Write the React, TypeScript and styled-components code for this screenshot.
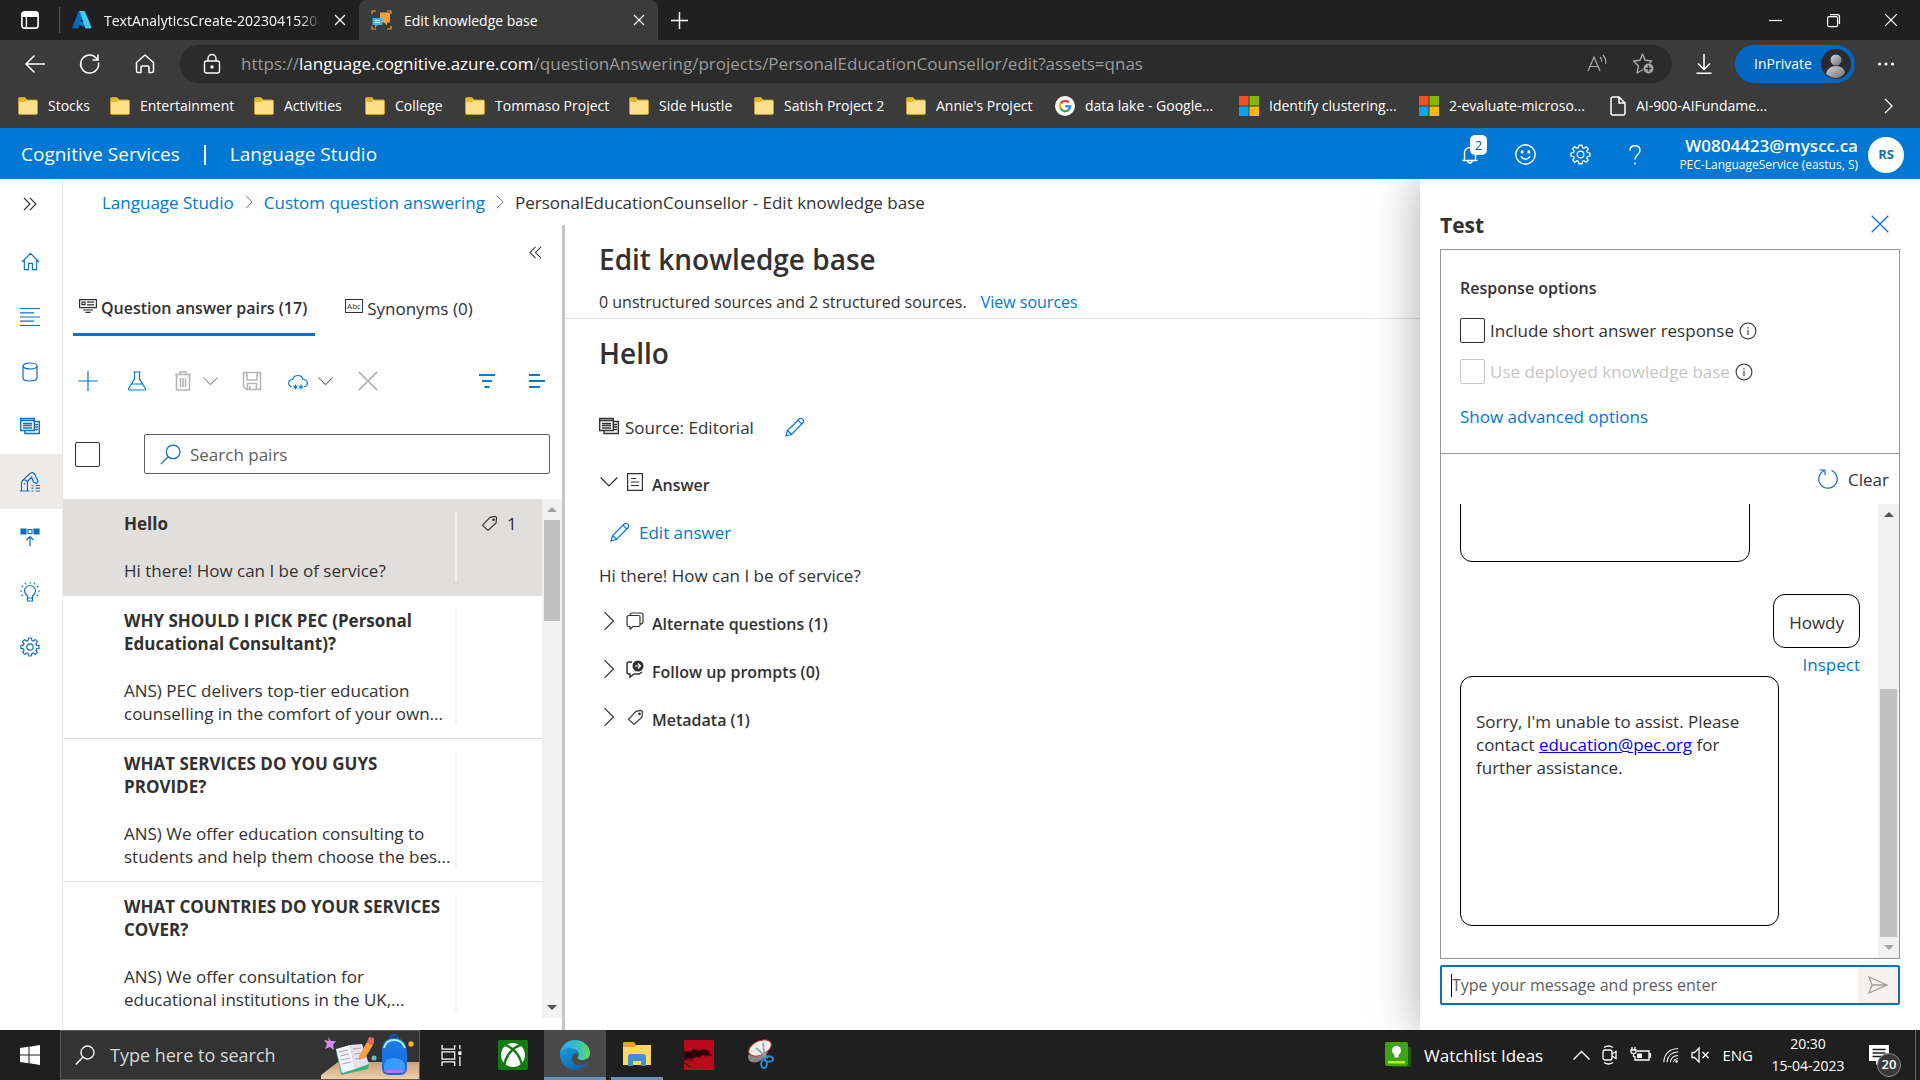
import React from "react";
import styled, { createGlobalStyle } from "styled-components";

const FONT = '"Open Sans", "Noto Sans", sans-serif';
const BLUE = "#0078d4";
const INK = "#323130";

const Global = createGlobalStyle`
  *, *::before, *::after { box-sizing: border-box; }
  html, body { margin: 0; padding: 0; }
  body { font-family: ${FONT}; font-size: 17px; line-height: 23px; color: ${INK}; background: #fff; overflow: hidden; }
  button, input { font: inherit; color: inherit; margin: 0; }
  h1, h2, h3, p, ul, ol { margin: 0; padding: 0; font-weight: inherit; font-size: inherit; }
  li { list-style: none; }
`;

const Screen = styled.div`
  height: 100vh;
  display: flex;
  flex-direction: column;
`;

/* ---------- icons ---------- */

const Svg = styled.svg`
  display: block;
  flex: none;
  overflow: visible;
`;

type IconProps = { w?: number; h?: number; box?: string; c?: string; s?: number; children: React.ReactNode };
const Icon = ({ w = 20, h = w, box = "0 0 20 20", c = "currentColor", s = 1.2, children }: IconProps) => (
  <Svg width={w} height={h} viewBox={box} fill="none" stroke={c} strokeWidth={s} aria-hidden="true">
    {children}
  </Svg>
);

const CloseIcon = ({ w = 12, s = 1.2, c }: { w?: number; s?: number; c?: string }) => (
  <Icon w={w} box="0 0 12 12" s={s} c={c}><path d="M1 1l10 10M11 1L1 11" /></Icon>
);
const ChevronRight = ({ w = 9, h = 18, s = 1.1, c }: { w?: number; h?: number; s?: number; c?: string }) => (
  <Icon w={w} h={h} box="0 0 9 18" s={s} c={c}><path d="M0.5 1l8 8-8 8" /></Icon>
);
const ChevronDown = ({ w = 16, s = 1.1, c }: { w?: number; s?: number; c?: string }) => (
  <Icon w={w} h={w / 2 + 1} box="0 0 16 9" s={s} c={c}><path d="M0.5 0.5l7.500 7.500 7.500-7.500" /></Icon>
);
const Gear = ({ w = 20, c }: { w?: number; c?: string }) => (
  <Icon w={w} c={c}>
    <circle cx="10" cy="10" r="3.200" />
    <path strokeLinejoin="round" d="M8.600 1h2.800l.5 2.500 1.400.6 2.100-1.500 2 2-1.500 2.100.6 1.400 2.500.5v2.800l-2.500.5-.6 1.400 1.500 2.100-2 2-2.100-1.500-1.400.6-.5 2.500H8.600l-.5-2.500-1.400-.6-2.100 1.500-2-2 1.500-2.100-.6-1.400L.9 11.400V8.600l2.500-.5.6-1.400-1.500-2.100 2-2 2.100 1.500 1.400-.6z" />
  </Icon>
);
const HomeIcon = ({ w = 20, c }: { w?: number; c?: string }) => (
  <Icon w={w} c={c}><path d="M1 10.500L10 1.500l9 9M3.500 8.500V18.500h4.500v-6.500h4v6.500h4.500V8.500" /></Icon>
);
const SourcesIcon = ({ w = 20, c }: { w?: number; c?: string }) => (
  <Icon w={w} c={c}>
    <path d="M.7 1.500h13.600v12H.7zM14.500 4.500h4.800v12H5V14M.7 3.500h13.600M3 6.500h9M3 8.500h9M3 11h9M15 7.500h3M15 10h3M15 12.500h3" strokeWidth="1.400" />
  </Icon>
);
const Pencil = ({ c = BLUE }: { c?: string }) => (
  <Icon w={20} h={20} c={c}><path d="M1 19l1.500-5.500L14.500 1.800a1.800 1.800 0 0 1 2.600 0l1.100 1.100a1.800 1.800 0 0 1 0 2.600L6.500 17.500zM2.500 13.500l4 4M13 3.200l3.900 3.900" /></Icon>
);
const TagIcon = ({ w = 18 }: { w?: number }) => (
  <Icon w={w} box="0 0 18 18">
    <path d="M9.500 2.500L15 1.500l1.500 1-.6 6L7.500 16.300 1.500 11z" strokeLinejoin="round" />
    <circle cx="13.300" cy="5" r=".8" fill="currentColor" />
  </Icon>
);
const InfoIcon = () => (
  <Icon w={18}><circle cx="10" cy="10" r="8.800" /><path d="M10 8.500v6M10 5.500v1.600" /></Icon>
);
const FolderIcon = () => (
  <Svg width="20" height="18" viewBox="0 0 20 18" aria-hidden="true">
    <path d="M.5 2Q.5.500 2 .5h5l2 2.500h9.500Q19.500 3 19.500 4.500V16Q19.500 17.500 18 17.500H2Q.5 17.500.5 16z" fill="#ffe08a" stroke="#c19c2a" />
    <path d="M1 5h6l2-2L7 1H2Q1 1 1 2z" fill="#e8b730" />
  </Svg>
);
const MsIcon = () => (
  <Svg width="20" height="20" viewBox="0 0 20 20" aria-hidden="true">
    <path fill="#f25022" d="M0 0h9.500v9.500H0z" /><path fill="#7fba00" d="M10.500 0H20v9.500h-9.500z" />
    <path fill="#00a4ef" d="M0 10.500h9.500V20H0z" /><path fill="#ffb900" d="M10.500 10.500H20V20h-9.500z" />
  </Svg>
);
const GoogleIcon = () => (
  <Svg width="20" height="20" viewBox="0 0 20 20" fill="none" strokeWidth="2.400" aria-hidden="true">
    <circle cx="10" cy="10" r="10" fill="#fff" />
    <path stroke="#ea4335" d="M5.600 7.500A5.200 5.200 0 0 1 13.800 6.400" /><path stroke="#fbbc05" d="M5.600 7.300a5.400 5.400 0 0 0 0 5.400" />
    <path stroke="#34a853" d="M5.600 12.500a5.200 5.200 0 0 0 8 1.300" /><path stroke="#4285f4" d="M10.200 10.200h5a5.200 5.200 0 0 1-1.700 3.700" />
  </Svg>
);
const DocIcon = () => (
  <Icon w={16} h={20} box="0 0 16 20" s={1.5}><path strokeLinejoin="round" d="M1 3q0-2 2-2h6l6 6v10q0 2-2 2H3q-2 0-2-2zM9 1v6h6" /></Icon>
);

/* ---------- browser chrome ---------- */

const IconButton = styled.button<{ $w?: number; $c?: string }>`
  flex: none;
  width: ${(p) => p.$w ?? 40}px;
  height: 32px;
  padding: 0;
  border: 0;
  background: none;
  color: ${(p) => p.$c ?? "inherit"};
  display: flex;
  align-items: center;
  justify-content: center;
`;

const TabStrip = styled.div`
  flex: none;
  height: 40px;
  background: #202020;
  color: #fff;
  display: flex;
  align-items: center;
  font-size: 14px;
`;
const TabMenu = styled.div`
  width: 59px;
  display: flex;
  align-items: center;
  justify-content: center;
`;
const BrowserTab = styled.div<{ $active?: boolean }>`
  width: 299px;
  height: 100%;
  display: flex;
  align-items: center;
  padding: 0 0 0 12px;
  border-radius: 8px 8px 0 0;
  background: ${(p) => (p.$active ? "#3b3b3b" : "transparent")};
`;
const TabSeparator = styled.div`
  width: 1px;
  height: 26px;
  background: #5a5a5a;
`;
const TabText = styled.span<{ $fade?: boolean }>`
  flex: 1;
  min-width: 0;
  margin-left: 12px;
  overflow: hidden;
  white-space: nowrap;
  ${(p) => p.$fade && "mask-image: linear-gradient(to right, #000 90%, transparent);"}
`;
const WindowButtons = styled.div`
  margin-left: auto;
  display: flex;
  align-items: center;
`;

const Toolbar = styled.div`
  flex: none;
  height: 48px;
  background: #3b3b3b;
  color: #fff;
  display: flex;
  align-items: center;
  padding: 0 8px 1px 7px;
`;
const NavButtons = styled.div`
  display: flex;
  width: 173px;
`;
const AddressBar = styled.div`
  flex: 1;
  min-width: 0;
  height: 38px;
  border-radius: 19px;
  background: #2b2b2b;
  display: flex;
  align-items: center;
  padding: 0 6px 0 23px;
  gap: 20px;
  color: #9a9a9a;
  b { color: #fff; font-weight: 400; }
`;
const Url = styled.span`
  flex: 1;
  white-space: nowrap;
  overflow: hidden;
`;
const AddressTools = styled.div`
  display: flex;
  color: #a8a8a8;
`;
const PrivateButton = styled.button`
  flex: none;
  width: 120px;
  height: 38px;
  margin: 0 4px 0 0;
  border: 0;
  border-radius: 19px;
  background: #0067c0;
  color: #fff;
  font-size: 14px;
  padding: 0 4px 0 19px;
  display: flex;
  align-items: center;
  justify-content: space-between;
`;

const Bookmarks = styled.nav`
  flex: none;
  height: 40px;
  background: #3b3b3b;
  color: #fff;
  font-size: 14px;
  display: flex;
  align-items: center;
  padding: 0 7px 5px 18px;
  gap: 20px;
`;
const Bookmark = styled.a<{ $w: number }>`
  flex: none;
  width: ${(p) => p.$w}px;
  display: flex;
  align-items: center;
  gap: 10px;
  white-space: nowrap;
  color: inherit;
  text-decoration: none;
`;

const bookmarks = [
  { t: "Stocks", w: 72, i: <FolderIcon /> },
  { t: "Entertainment", w: 124, i: <FolderIcon /> },
  { t: "Activities", w: 91, i: <FolderIcon /> },
  { t: "College", w: 80, i: <FolderIcon /> },
  { t: "Tommaso Project", w: 144, i: <FolderIcon /> },
  { t: "Side Hustle", w: 105, i: <FolderIcon /> },
  { t: "Satish Project 2", w: 132, i: <FolderIcon /> },
  { t: "Annie's Project", w: 129, i: <FolderIcon /> },
  { t: "data lake - Google...", w: 164, i: <GoogleIcon /> },
  { t: "Identify clustering...", w: 160, i: <MsIcon /> },
  { t: "2-evaluate-microso...", w: 171, i: <MsIcon /> },
  { t: "AI-900-AIFundame...", w: 170, i: <DocIcon /> },
];

/* ---------- portal header ---------- */

const PortalHeader = styled.header`
  flex: none;
  height: 51px;
  background: ${BLUE};
  color: #fff;
  display: flex;
  align-items: center;
  padding: 2px 16px 0 21px;
  font-size: 19px;
`;
const Divider = styled.span`
  width: 2px;
  height: 20px;
  margin: 0 24px;
  background: #fff;
`;
const HeaderTools = styled.div`
  margin-left: auto;
  display: flex;
  gap: 15px;
`;
const Bell = styled.span`
  position: relative;
`;
const Badge = styled.span`
  position: absolute;
  left: 10px;
  top: -10px;
  width: 17px;
  height: 20px;
  border-radius: 5px;
  background: #fff;
  color: #005a9e;
  font-size: 13px;
  line-height: 20px;
`;
const Account = styled.div`
  width: 203px;
  margin-right: 10px;
  text-align: right;
  white-space: nowrap;
  font-size: 12px;
  line-height: 18px;
  strong { display: block; font-size: 17px; line-height: 20px; font-weight: 600; }
`;
const Avatar = styled.button`
  width: 36px;
  height: 36px;
  border: 0;
  border-radius: 50%;
  padding: 0;
  background: #fff;
  color: #106ebe;
  font-size: 13px;
  font-weight: 700;
`;

/* ---------- page ---------- */

const Page = styled.div`
  flex: 1;
  min-height: 0;
  display: flex;
  background: #fff;
`;
const Rail = styled.nav`
  flex: none;
  width: 63px;
  border-right: 1px solid #edebe9;
  color: #106ebe;
`;
const RailItem = styled.button<{ $active?: boolean; $first?: boolean }>`
  width: 100%;
  height: ${(p) => (p.$first ? 50 : 55)}px;
  margin-bottom: ${(p) => (p.$first ? 5 : 0)}px;
  padding: 0 2px 0 0;
  border: 0;
  display: flex;
  align-items: center;
  justify-content: center;
  background: ${(p) => (p.$active ? "#edebe9" : "transparent")};
  color: ${(p) => (p.$first ? INK : "inherit")};
`;
const Center = styled.div`
  flex: 1;
  min-width: 0;
  display: flex;
  flex-direction: column;
`;
const Crumbs = styled.ol`
  flex: none;
  height: 46px;
  padding: 0 0 0 39px;
  display: flex;
  align-items: center;
  gap: 11px;
  white-space: nowrap;
  li { display: flex; align-items: center; gap: 11px; }
`;
const Link = styled.a`
  color: ${BLUE};
  text-decoration: none;
`;
const Columns = styled.div`
  flex: 1;
  min-height: 0;
  display: flex;
`;
const PairsPanel = styled.section`
  flex: none;
  width: 502px;
  border-right: 3px solid #c8c6c4;
  display: flex;
  flex-direction: column;
`;
const Collapse = styled.div`
  display: flex;
  justify-content: flex-end;
  padding: 11px 7px 0 0;
`;
const Tabs = styled.div`
  display: flex;
  margin: 13px 0 0 10px;
  gap: 14px;
`;
const Tab = styled.button<{ $active?: boolean }>`
  height: 55px;
  padding: 3px ${(p) => (p.$active ? 8 : 16)}px 0 ${(p) => (p.$active ? 6 : 16)}px;
  border: 0;
  border-bottom: 3px solid ${(p) => (p.$active ? "#106ebe" : "transparent")};
  background: none;
  display: flex;
  align-items: center;
  gap: 4px;
  font-size: ${(p) => (p.$active ? 16 : 17)}px;
  font-weight: ${(p) => (p.$active ? 600 : 400)};
  white-space: nowrap;
  svg { margin-bottom: 5px; }
`;
const Commands = styled.div`
  height: 90px;
  display: flex;
  align-items: center;
  padding: 0 0 0 9px;
`;
const Spacer = styled.span`
  flex: 1;
`;
const SearchRow = styled.div`
  display: flex;
  align-items: center;
  gap: 44px;
  padding: 0 12px 25px 12px;
  margin-top: 8px;
`;
const Check = styled.input`
  appearance: none;
  flex: none;
  width: 25px;
  height: 25px;
  border: 1px solid ${INK};
  border-radius: 2px;
  background: #fff;
  &:disabled { border-color: #c8c6c4; }
`;
const SearchBox = styled.label`
  flex: 1;
  height: 40px;
  border: 1px solid #605e5c;
  border-radius: 2px;
  display: flex;
  align-items: center;
  gap: 9px;
  padding: 0 15px;
  color: #106ebe;
`;
const PlainInput = styled.input`
  flex: 1;
  min-width: 0;
  padding: 0;
  border: 0;
  outline: 0;
  background: none;
  color: ${INK};
  &::placeholder { color: #605e5c; opacity: 1; }
`;
const ListArea = styled.div`
  flex: 1;
  min-height: 0;
  margin-bottom: 12px;
  display: flex;
`;
const PairList = styled.ul`
  flex: 1;
  min-width: 0;
  overflow: hidden;
`;
const Pair = styled.li<{ $active?: boolean }>`
  display: flex;
  padding: 13px 0 13px 61px;
  border-bottom: 1px solid #e1dfdd;
  background: ${(p) => (p.$active ? "#e1dfdd" : "#fff")};
`;
const PairText = styled.div`
  width: 333px;
  border-right: 2px solid #f3f2f1;
  white-space: pre-line;
  h3 { font-weight: 700; margin-bottom: 24px; white-space: pre; }
`;
const PairMeta = styled.div`
  display: flex;
  gap: 9px;
  align-self: flex-start;
  align-items: center;
  padding-left: 24px;
`;
const ScrollTrack = styled.div<{ $w: number }>`
  flex: none;
  width: ${(p) => p.$w}px;
  background: #f1f1f1;
  display: flex;
  flex-direction: column;
  align-items: center;
  padding: 0 2px;
`;
const ScrollArrow = styled.span<{ $up?: boolean; $dim?: boolean }>`
  flex: none;
  height: 21px;
  display: flex;
  align-items: center;
  &::before {
    content: "";
    border: 5px solid transparent;
    ${(p) => (p.$up ? "border-top: 0; border-bottom" : "border-bottom: 0; border-top")}: 5px solid ${(p) => (p.$dim ? "#a3a3a3" : "#505050")};
  }
`;
const ScrollThumb = styled.span<{ $before: number; $size: number; $after: number }>`
  flex: 1;
  width: 100%;
  display: grid;
  grid-template-rows: ${(p) => `${p.$before}fr ${p.$size}fr ${p.$after}fr`};
  &::before { content: ""; grid-row: 2; background: #c1c1c1; }
`;

const pairs = [
  { q: "Hello", a: "Hi there! How can I be of service?", tags: 1, active: true },
  { q: "WHY SHOULD I PICK PEC (Personal\nEducational Consultant)?", a: "ANS) PEC delivers top-tier education\ncounselling in the comfort of your own..." },
  { q: "WHAT SERVICES DO YOU GUYS\nPROVIDE?", a: "ANS) We offer education consulting to\nstudents and help them choose the bes..." },
  { q: "WHAT COUNTRIES DO YOUR SERVICES\nCOVER?", a: "ANS) We offer consultation for\neducational institutions in the UK,..." },
];

const Editor = styled.main`
  flex: 1;
  min-width: 0;
`;
const EditorHead = styled.div`
  height: 94px;
  padding: 15px 34px 0;
  border-bottom: 1px solid #e1dfdd;
`;
const Title = styled.h1`
  font-size: 28px;
  line-height: 38px;
  font-weight: 600;
`;
const SubLine = styled.p`
  display: flex;
  gap: 14px;
  margin-top: 13px;
  font-size: 16px;
`;
const EditorBody = styled.div`
  padding: 15px 34px;
`;
const SourceLine = styled.div`
  display: flex;
  align-items: center;
  gap: 6px;
  margin-top: 39px;
  height: 32px;
  button { margin-left: 14px; }
`;
const Section = styled.button`
  width: 100%;
  height: 48px;
  padding: 2px 0 0;
  border: 0;
  background: none;
  display: grid;
  grid-template-columns: 19px 18px 1fr;
  column-gap: 8px;
  align-items: center;
  justify-items: center;
  font-size: 16px;
  font-weight: 600;
  svg { margin-bottom: 6px; }
  span { justify-self: start; }
`;
const AnswerBlock = styled.div`
  margin-top: 17px;
`;
const EditAnswer = styled.button`
  height: 48px;
  padding: 0 11px;
  border: 0;
  background: none;
  color: ${BLUE};
  display: flex;
  align-items: center;
  gap: 9px;
`;
const AnswerText = styled.p`
  margin: 8px 0 12px;
`;

/* ---------- test panel ---------- */

const TestPanel = styled.aside`
  flex: none;
  width: 500px;
  padding: 0 20px 25px;
  background: #fff;
  box-shadow: 0 0 45px rgba(0, 0, 0, 0.35);
  clip-path: inset(0 0 0 -60px);
  display: flex;
  flex-direction: column;
`;
const TestHead = styled.div`
  height: 70px;
  padding-top: 20px;
  display: flex;
  align-items: center;
  justify-content: space-between;
  h2 { font-size: 21px; font-weight: 700; line-height: 30px; padding-top: 2px; }
`;
const TestBox = styled.div`
  flex: 1;
  min-height: 0;
  border: 1px solid #979593;
  display: flex;
  flex-direction: column;
`;
const Options = styled.div`
  height: 204px;
  padding: 27px 19px 0;
  border-bottom: 1px solid #979593;
  h3 { font-size: 16px; font-weight: 600; margin-bottom: 10px; }
`;
const OptionRow = styled.div`
  height: 41px;
  display: flex;
  align-items: center;
  gap: 5px;
`;
const OptionLabel = styled.label<{ $off?: boolean }>`
  color: ${(p) => (p.$off ? "#c8c6c4" : "inherit")};
`;
const Advanced = styled(Link)`
  display: block;
  margin-top: 13px;
`;
const ClearRow = styled.div`
  height: 50px;
  padding: 0 10px 0 0;
  display: flex;
  justify-content: flex-end;
`;
const ClearButton = styled.button`
  border: 0;
  padding: 0;
  background: none;
  display: flex;
  align-items: center;
  gap: 10px;
`;
const ChatArea = styled.div`
  flex: 1;
  min-height: 0;
  display: flex;
`;
const Chat = styled.div`
  flex: 1;
  min-height: 0;
  overflow: hidden;
  padding: 0 18px 32px 19px;
  display: flex;
  flex-direction: column;
  justify-content: flex-end;
`;
const BotBubble = styled.div<{ $w: number }>`
  flex: none;
  width: ${(p) => p.$w}px;
  height: 250px;
  padding: 33px 15px;
  border: 1px solid #000;
  border-radius: 12px;
  a { color: #0000ee; }
`;
const UserBubble = styled.div`
  flex: none;
  align-self: flex-end;
  height: 54px;
  margin-top: 32px;
  padding: 2px 15px 0;
  border: 1px solid #000;
  border-radius: 12px;
  display: flex;
  align-items: center;
`;
const Inspect = styled(Link)`
  align-self: flex-end;
  margin-top: 5px;
`;
const MessageBox = styled.form`
  flex: none;
  height: 40px;
  margin-top: 6px;
  border: 2px solid #106ebe;
  border-radius: 2px;
  display: flex;
  align-items: center;
  padding-left: 9px;
  font-size: 16px;
`;
const Caret = styled.span`
  width: 1px;
  height: 23px;
  background: #000;
`;
const Send = styled.button`
  align-self: stretch;
  width: 40px;
  border: 0;
  padding: 0;
  background: #f3f2f1;
  color: #a19f9d;
  display: flex;
  align-items: center;
  justify-content: center;
`;

/* ---------- taskbar ---------- */

const Taskbar = styled.footer`
  flex: none;
  height: 50px;
  background: #1f1f1f;
  color: #fff;
  display: flex;
  align-items: stretch;
`;
const Start = styled.button`
  width: 60px;
  border: 0;
  padding: 0;
  background: none;
  display: flex;
  align-items: center;
  justify-content: center;
`;
const TaskSearch = styled.label`
  width: 360px;
  background: #333;
  border: 1px solid #5a5a5a;
  display: flex;
  align-items: center;
  gap: 15px;
  padding-left: 14px;
  font-size: 18px;
  color: #fff;
  input { color: #fff; }
  input::placeholder { color: #d6d6d6; }
`;
const TaskApp = styled.button<{ $on?: boolean; $open?: boolean }>`
  width: ${(p) => (p.$open ? 52 : 62)}px;
  margin: 0 ${(p) => (p.$open ? 5 : 0)}px;
  border: 0;
  border-bottom: 3px solid transparent;
  padding: 3px 0 0;
  background: ${(p) => (p.$on ? "#4a4a4a" : "none")};
  ${(p) => (p.$on || p.$open) && "border-bottom-color: #6893bb;"}
  display: flex;
  align-items: center;
  justify-content: center;
`;
const TrayText = styled.span`
  font-size: 15px;
`;
const Watchlist = styled.button`
  margin-left: auto;
  width: 188px;
  border: 0;
  padding: 0;
  background: none;
  font-size: 17px;
  white-space: nowrap;
  display: flex;
  align-items: center;
  gap: 13px;
`;
const Tray = styled.div`
  width: 180px;
  display: flex;
  align-items: center;
  justify-content: space-between;
`;
const Clock = styled.time`
  width: 113px;
  font-size: 14px;
  line-height: 22px;
  text-align: center;
  padding: 3px 3px 0 0;
`;
const Notify = styled.button`
  width: 50px;
  margin-right: 4px;
  border: 0;
  border-right: 1px solid #6a6a6a;
  padding: 0 0 0 3px;
  background: none;
  display: flex;
  align-items: center;
`;
const NotifyIcon = styled.span`
  position: relative;
`;
const NotifyCount = styled.span`
  position: absolute;
  left: 8px;
  top: 8px;
  width: 24px;
  height: 24px;
  border: 1px solid #8a8a8a;
  border-radius: 50%;
  background: #3a3a3a;
  font-size: 13px;
  line-height: 21px;
  font-weight: 600;
`;

const SearchArt = () => (
  <Svg width="98" height="48" viewBox="0 0 98 48" aria-hidden="true">
    <defs>
      <linearGradient id="desk" x1="0" y1="0" x2="0" y2="1"><stop offset="0" stopColor="#c8a27c" /><stop offset="1" stopColor="#efd0a8" /></linearGradient>
      <linearGradient id="pack" x1="0" y1="0" x2="0" y2="1"><stop offset="0" stopColor="#1b7fe0" /><stop offset="1" stopColor="#1565e8" /></linearGradient>
    </defs>
    <path d="M0 48V44L17 31H98V48z" fill="url(#desk)" />
    <path d="M7 6l3 4 5 0-3 4 1 5-4-3-5 2 2-5-3-4 5 1z" fill="#d98af0" />
    <path d="M15 19l17-4 16 18-1 5-27 6z" fill="#3fae7c" />
    <path d="M15 18l14-4 5 24-13 4z" fill="#f6f4fa" /><path d="M29 14l12-1 7 20-14 5z" fill="#e6e0ee" />
    <path d="M18 21l9-2M19 25l9-2M20 29l9-2M21 33l9-2M32 18l8-1M33 23l8-1M34 28l8-1" stroke="#a7a3b8" />
    <path d="M38 25l8-14 6 3-8 13-6 2z" fill="#f6a03c" /><path d="M46 11l2-5 5 1 0 5-1 2z" fill="#e8645a" />
    <circle cx="53" cy="27" r="2.500" fill="#5ec6c0" /><circle cx="90" cy="13" r="2.700" fill="#f6b21b" />
    <path d="M69 10q0-6 4-6t4 6" fill="none" stroke="#1556a8" strokeWidth="2.500" />
    <path d="M61 21Q61 7 73 7T86 21V37Q86 44 79 44H68Q61 44 61 37z" fill="url(#pack)" />
    <path d="M63 17Q65 9 73 9T84 17" fill="none" stroke="#a8ecff" strokeWidth="1.800" />
    <path d="M63 35Q63 27 73 27T84 35V41H63z" fill="#3f97ff" /><path d="M65 39h17v3H65z" fill="#a87af0" />
  </Svg>
);

const EdgeLogo = () => (
  <Svg width="30" height="30" viewBox="0 0 30 30" aria-hidden="true">
    <defs>
      <linearGradient id="edgeTop" x1="0" y1="0.500" x2="1" y2="0.500"><stop offset="0" stopColor="#2aa5e8" /><stop offset="0.600" stopColor="#35c1c8" /><stop offset="1" stopColor="#66e05a" /></linearGradient>
      <linearGradient id="edgeLow" x1="0" y1="0" x2="1" y2="1"><stop offset="0" stopColor="#1b9de2" /><stop offset="1" stopColor="#0c59a4" /></linearGradient>
    </defs>
    <path d="M0 15C0 6 7 0 15 0s15 6 15 13c0 5-4 7-8 7-3 0-5-1-4-3 2-4-1-8-6-8-6 0-12 3-12 6z" fill="url(#edgeTop)" />
    <path d="M0 14c1-4 5-6 10-6 4 0 8 3 8 7-1-2-6-2-6 4 0 5 6 9 15 4-3 5-7 7-12 7C6 30 0 23 0 14z" fill="url(#edgeLow)" />
  </Svg>
);

export default function App() {
  return (
    <Screen>
      <Global />
      <TabStrip>
        <TabMenu>
          <Icon w={18}><rect x="1" y="1" width="18" height="18" rx="3" strokeWidth="1.800" /><path d="M1.500 2h17v4h-17z" fill="#fff" /><path d="M6 6v12" strokeWidth="1.500" /></Icon>
        </TabMenu>
        <TabSeparator />
        <BrowserTab>
          <Svg width="20" height="18" viewBox="0 0 20 18" aria-hidden="true">
            <path d="M6.500 0h6L6.200 17.500H1.300Q0 17.500.5 16z" fill="#1066b8" /><path d="M5 11h9l-3 5z" fill="#0078d4" />
            <path d="M7.500 0h5.300l6.500 16q.4 1.500-1 1.500h-5z" fill="#3ccbf4" />
          </Svg>
          <TabText $fade>TextAnalyticsCreate-2023041520</TabText>
          <IconButton $w={38} aria-label="Close tab"><CloseIcon /></IconButton>
        </BrowserTab>
        <BrowserTab $active>
          <Svg width="21" height="20" viewBox="0 0 21 20" aria-hidden="true">
            <path d="M1 4V1h4M16 1h4v3M1 16v3h4M16 19h4v-3" fill="none" stroke="#e8a13a" strokeWidth="1.200" />
            <path d="M9 2.500h10v10h-3v3l-3-3H9z" fill="#f2a33c" /><path d="M1.500 8h10v7H7l-3 3v-3H1.500z" fill="#38b6f0" /><path d="M4 10.500h5M4 12.500h5" stroke="#d4f2ff" />
          </Svg>
          <TabText>Edit knowledge base</TabText>
          <IconButton $w={38} aria-label="Close tab"><CloseIcon /></IconButton>
        </BrowserTab>
        <IconButton aria-label="New tab" $w={43}><Icon w={17} box="0 0 17 17" s={1.5}><path d="M8.500 0v17M0 8.500h17" /></Icon></IconButton>
        <WindowButtons>
          <IconButton $w={58} aria-label="Minimize"><Icon w={13} box="0 0 13 13"><path d="M0 6.500h13" /></Icon></IconButton>
          <IconButton $w={58} aria-label="Restore"><Icon w={13} box="0 0 13 13"><rect x=".6" y="2.600" width="10" height="10" rx="1.500" /><path d="M3 .6h7.500q2 0 2 2V10" /></Icon></IconButton>
          <IconButton $w={58} aria-label="Close"><CloseIcon w={14} s={1} /></IconButton>
        </WindowButtons>
      </TabStrip>

      <Toolbar>
        <NavButtons>
          <IconButton $w={55} aria-label="Back"><Icon w={20}><path d="M20 10H1M9.500 1.500L1 10l8.500 8.500" strokeWidth="1.500" /></Icon></IconButton>
          <IconButton $w={55} aria-label="Refresh"><Icon w={20}><path d="M18.500 8.500A9 9 0 1 1 14 2.200l3.500 3M18 .5v5.500h-5.500" strokeWidth="1.500" /></Icon></IconButton>
          <IconButton $w={55} aria-label="Home"><Icon w={20}><path strokeWidth="1.500" strokeLinejoin="round" d="M1.500 8.500L10 1l8.500 7.500V17q0 1.500-1.500 1.500h-3V13q0-1-1-1H7q-1 0-1 1v5.500H3q-1.500 0-1.500-1.500z" /></Icon></IconButton>
        </NavButtons>
        <AddressBar>
          <Icon w={18} h={20} box="0 0 18 20" c="#fff" s={1.4}><rect x="1.500" y="7" width="15" height="12" rx="2" /><path d="M5 7V4.500a4 4 0 0 1 8 0V7" /><circle cx="9" cy="13" r="1" fill="#fff" /></Icon>
          <Url>https://<b>language.cognitive.azure.com</b>/questionAnswering/projects/PersonalEducationCounsellor/edit?assets=qnas</Url>
          <AddressTools>
            <IconButton $w={46} aria-label="Read aloud"><Icon w={20}><path d="M1 17L7 3l6 14M3 12.500h8M13 3q2 2 1.500 5M16 1q3.500 4 2.500 9" /></Icon></IconButton>
            <IconButton $w={46} aria-label="Add to favorites"><Icon w={22} box="0 0 22 22" s={1.4}><path strokeLinejoin="round" d="M11 16.500l-6 3.500 1.500-7L1.500 8l6.500-.7L10.500 1l2.700 6.300 6.500.7-2 2" /><circle cx="16.500" cy="15.500" r="5" fill="#a8a8a8" stroke="none" /><path d="M16.500 12.500v6M13.500 15.500h6" stroke="#2b2b2b" /></Icon></IconButton>
          </AddressTools>
        </AddressBar>
        <IconButton $w={63} aria-label="Downloads"><Icon w={20}><path strokeWidth="1.500" d="M10 0v15M4 9.500l6 6 6-6M2.500 19.200h15" /></Icon></IconButton>
        <PrivateButton>
          InPrivate
          <Svg width="30" height="30" viewBox="0 0 30 30" aria-hidden="true">
            <defs><linearGradient id="face" x1="0" y1="0" x2="1" y2="1"><stop offset="0" stopColor="#d8d8dc" /><stop offset="1" stopColor="#6b6e74" /></linearGradient></defs>
            <circle cx="15" cy="15" r="15" fill="#2b2b2b" /><circle cx="15" cy="11" r="5.500" fill="url(#face)" /><path d="M5 25q2-8 10-8t9 7q-4 5-9 5T5 25z" fill="url(#face)" />
          </Svg>
        </PrivateButton>
        <IconButton $w={53} aria-label="Settings and more"><Icon w={18} h={4} box="0 0 18 4"><g fill="#fff" stroke="none"><circle cx="2.500" cy="2" r="1.600" /><circle cx="9" cy="2" r="1.600" /><circle cx="15.500" cy="2" r="1.600" /></g></Icon></IconButton>
      </Toolbar>

      <Bookmarks aria-label="Favorites">
        {bookmarks.map((b) => (
          <Bookmark key={b.t} href="#" $w={b.w}>{b.i}{b.t}</Bookmark>
        ))}
        <Spacer />
        <IconButton $w={50} aria-label="More favorites"><ChevronRight w={9} h={16} s={1.5} /></IconButton>
      </Bookmarks>

      <PortalHeader>
        <span>Cognitive Services</span>
        <Divider />
        <span>Language Studio</span>
        <HeaderTools>
          <IconButton aria-label="Notifications"><Bell><Icon w={20}><path d="M2.500 15.500h15M4.500 15.500V8a5.500 5.500 0 0 1 11 0v7.500M8 16a2 2 0 0 0 4 0" strokeWidth="1.400" /></Icon><Badge>2</Badge></Bell></IconButton>
          <IconButton aria-label="Feedback"><Icon w={21} s={1.4}><circle cx="10" cy="10" r="9.200" /><path d="M5.500 12q4.500 5 9 0" /><circle cx="6.800" cy="7.500" r=".8" fill="#fff" /><circle cx="13.200" cy="7.500" r=".8" fill="#fff" /></Icon></IconButton>
          <IconButton aria-label="Settings"><Gear w={21} /></IconButton>
          <IconButton aria-label="Help"><Icon w={20} s={1.4}><path d="M5 5.500Q5 .8 10 .8t5 4.700c0 4-5 4-5 9M10 17.500V19.500" /></Icon></IconButton>
        </HeaderTools>
        <Account><strong>W0804423@myscc.ca</strong>PEC-LanguageService (eastus, S)</Account>
        <Avatar>RS</Avatar>
      </PortalHeader>

      <Page>
        <Rail aria-label="Sections">
          <RailItem $first aria-label="Expand"><Icon w={14} box="0 0 14 14" s={1.1}><path d="M1 1l6 6-6 6M7 1l6 6-6 6" /></Icon></RailItem>
          <RailItem aria-label="Home"><HomeIcon w={19} /></RailItem>
          <RailItem aria-label="Projects"><Icon w={20}><path d="M0 1.500h20M0 5.800h14M0 10h20M0 14.200h14M0 18.500h20" /></Icon></RailItem>
          <RailItem aria-label="Data"><Icon w={20}><ellipse cx="10" cy="4" rx="7" ry="3" /><path d="M3 4v12q0 3 7 3t7-3V4" /></Icon></RailItem>
          <RailItem aria-label="Manage sources"><SourcesIcon w={20} /></RailItem>
          <RailItem $active aria-label="Edit knowledge base"><Icon w={20}><path d="M1.500 19V11q0-3 3-3t3 3v8M0 19h9.500M4.500 11v1.500M2 9l8-7.500 2.500-1 2 1.500L18 9l-1.500 2.500-3-1.500-2-5-4.500 5M11.500 13.500h2M15.500 13.500H20M11.500 16.200h2M15.500 16.200H20M11.500 19h2M15.500 19H20" /></Icon></RailItem>
          <RailItem aria-label="Deploy"><Icon w={20}><path d="M1 2h5v5H1zM14 2h5v5h-5z" fill="currentColor" /><path d="M8 2.500h4v4H8zM10 19v-9M6.500 13L10 9.500l3.500 3.500" /></Icon></RailItem>
          <RailItem aria-label="Suggestions"><Icon w={20}><path d="M7.500 16v-2q-3-2.500-3-5a5.500 5.500 0 0 1 11 0q0 2.500-3 5v2zM7.500 16v3h5v-3M10 0v1.500M5 .8l1 1.500M15 .8l-1 1.500M1.500 4l1.500 1M18.500 4L17 5M0 9h2M20 9h-2M1.500 14L3 13M18.500 14L17 13" /></Icon></RailItem>
          <RailItem aria-label="Settings"><Gear w={20} /></RailItem>
        </Rail>

        <Center>
          <Crumbs>
            <li><Link href="#">Language Studio</Link><ChevronRight w={8} h={14} c="#605e5c" /></li>
            <li><Link href="#">Custom question answering</Link><ChevronRight w={8} h={14} c="#605e5c" /></li>
            <li>PersonalEducationCounsellor - Edit knowledge base</li>
          </Crumbs>
          <Columns>
            <PairsPanel>
              <Collapse><IconButton aria-label="Collapse"><Icon w={13} box="0 0 14 14" s={1.1}><path d="M7 1L1 7l6 6M13 1L7 7l6 6" /></Icon></IconButton></Collapse>
              <Tabs>
                <Tab $active>
                  <Icon w={18} h={14} box="0 0 18 14"><path d="M.6.6h16.800v8H.6zM3 3.200h3v2.500H3zM8 3.200h7M8 5.800h7M4 11h10M6.500 13.400h5" /></Icon>
                  Question answer pairs (17)
                </Tab>
                <Tab>
                  <Icon w={18} h={14} box="0 0 18 14" s={1}><rect x=".5" y=".5" width="17" height="13" /><text x="9" y="9.500" fontSize="8" fill="currentColor" stroke="none" textAnchor="middle">Abc</text></Icon>
                  Synonyms (0)
                </Tab>
              </Tabs>
              <Commands>
                <IconButton $w={32} $c={BLUE} aria-label="Add"><Icon w={20}><path d="M10 0v20M0 10h20" /></Icon></IconButton>
                <IconButton $w={66} $c={BLUE} aria-label="Test"><Icon w={20}><path d="M6.500 1h7M7.500 1v7L1.800 17q-1 2 1 2h14.400q2 0 1-2L12.500 8V1M5 13h10" /></Icon></IconButton>
                <IconButton $w={26} $c="#b8b6b4" aria-label="Delete" disabled><Icon w={20}><path d="M2 3.500h16M7 3.500V1h6v2.500M3.500 3.500V19h13V3.500M7.500 7v9M10 7v9M12.500 7v9" strokeWidth="1.600" /></Icon></IconButton>
                <IconButton $w={28} $c="#8a8886" aria-label="Delete options"><ChevronDown w={15} /></IconButton>
                <IconButton $w={56} $c="#b8b6b4" aria-label="Save" disabled><Icon w={20}><path d="M1.500 1.500h17v17h-14l-3-3zM5 1.500V9h10V1.500M5.500 18.500v-6h9v6M8 15v3" strokeWidth="1.600" /></Icon></IconButton>
                <IconButton $w={36} $c={BLUE} aria-label="Import or export"><Icon w={20}><path d="M4 15.500q-3.300-.4-3.300-3.600T4.500 8.500Q6 4.500 10 4.500t5 4q4.300 0 4.300 3.500t-3.300 3.500" /><path strokeWidth="1" d="M7.500 13.500v5M5.300 14.700l4.400 2.600M9.700 14.700l-4.400 2.600M13 13.500v5M10.800 14.700l4.400 2.600M15.200 14.700l-4.400 2.600" /></Icon></IconButton>
                <IconButton $w={18} $c="#605e5c" aria-label="Import options"><ChevronDown w={15} /></IconButton>
                <IconButton $w={68} $c="#b8b6b4" aria-label="Cancel" disabled><CloseIcon w={22} s={1} /></IconButton>
                <Spacer />
                <IconButton $w={50} $c={BLUE} aria-label="Filter"><Icon w={16} h={14} box="0 0 16 14" s={2}><path d="M0 1h16M3 7h10M5.500 13h5" /></Icon></IconButton>
                <IconButton $w={50} $c={BLUE} aria-label="Sort"><Icon w={16} h={14} box="0 0 16 14" s={2}><path d="M0 1h11M0 7h16M0 13h11" /></Icon></IconButton>
              </Commands>
              <SearchRow>
                <Check type="checkbox" aria-label="Select all pairs" />
                <SearchBox>
                  <Icon w={21}><circle cx="12.500" cy="7.500" r="6.500" /><path d="M7.800 12.200L.8 19.200" /></Icon>
                  <PlainInput placeholder="Search pairs" aria-label="Search pairs" />
                </SearchBox>
              </SearchRow>
              <ListArea>
                <PairList>
                  {pairs.map((p) => (
                    <Pair key={p.q} $active={p.active}>
                      <PairText><h3>{p.q}</h3><p>{p.a}</p></PairText>
                      {p.tags && <PairMeta><TagIcon w={17} />{p.tags}</PairMeta>}
                    </Pair>
                  ))}
                </PairList>
                <ScrollTrack $w={20}>
                  <ScrollArrow $up $dim />
                  <ScrollThumb $before={0} $size={101} $after={376} />
                  <ScrollArrow />
                </ScrollTrack>
              </ListArea>
            </PairsPanel>

            <Editor>
              <EditorHead>
                <Title>Edit knowledge base</Title>
                <SubLine>0 unstructured sources and 2 structured sources. <Link href="#">View sources</Link></SubLine>
              </EditorHead>
              <EditorBody>
                <Title as="h2">Hello</Title>
                <SourceLine>
                  <SourcesIcon w={20} />
                  <span>Source: Editorial</span>
                  <IconButton $w={42} aria-label="Edit source"><Pencil /></IconButton>
                </SourceLine>
                <AnswerBlock>
                  <Section aria-expanded="true"><ChevronDown w={18} /><Icon w={16} h={18} box="0 0 16 18"><path d="M.6.6h14.800v16.800H.6zM4 5.500h5M4 9h8M4 12.500h8" /></Icon><span>Answer</span></Section>
                  <EditAnswer><Pencil />Edit answer</EditAnswer>
                  <AnswerText>Hi there! How can I be of service?</AnswerText>
                </AnswerBlock>
                <Section><ChevronRight w={10} h={20} /><Icon w={18} box="0 0 18 18"><path strokeLinejoin="round" d="M3 3.500h9.500q1.500 0 1.500 1.500v8q0 1.500-1.500 1.500H7L4 17.200v-2.700H3Q1 14.500 1 13V5.500Q1 3.500 3 3.500zM4 3.500Q4.500 1 6.500 1H15q2 0 2 2v6.500Q17 12 14.500 12" /></Icon><span>Alternate questions (1)</span></Section>
                <Section><ChevronRight w={10} h={20} /><Icon w={18} box="0 0 18 18"><path d="M6 2H3Q1 2 1 4v8q0 2 2 2h1v3l4-3h5l3-2" strokeWidth="1.500" /><circle cx="12" cy="6" r="5.500" fill="currentColor" stroke="none" /><path d="M9 6h5.500M12 3.500L14.500 6 12 8.500" stroke="#fff" /></Icon><span>Follow up prompts (0)</span></Section>
                <Section><ChevronRight w={10} h={20} /><TagIcon w={17} /><span>Metadata (1)</span></Section>
              </EditorBody>
            </Editor>
          </Columns>
        </Center>

        <TestPanel>
          <TestHead>
            <h2>Test</h2>
            <IconButton $c={BLUE} aria-label="Close test panel"><CloseIcon w={20} s={0.8} /></IconButton>
          </TestHead>
          <TestBox>
            <Options>
              <h3>Response options</h3>
              <OptionRow><Check type="checkbox" id="short" /><OptionLabel htmlFor="short">Include short answer response</OptionLabel><InfoIcon /></OptionRow>
              <OptionRow><Check type="checkbox" id="deployed" disabled /><OptionLabel $off htmlFor="deployed">Use deployed knowledge base</OptionLabel><InfoIcon /></OptionRow>
              <Advanced href="#">Show advanced options</Advanced>
            </Options>
            <ClearRow>
              <ClearButton><Icon w={20} c="#106ebe"><path d="M13.500 1.500A9.200 9.200 0 1 1 6 1.700M1.500 1h5.500v5" /></Icon>Clear</ClearButton>
            </ClearRow>
            <ChatArea>
              <Chat>
                <BotBubble $w={290} />
                <UserBubble>Howdy</UserBubble>
                <Inspect href="#">Inspect</Inspect>
                <BotBubble $w={319}>Sorry, I'm unable to assist. Please contact <a href="#">education@pec.org</a> for further assistance.</BotBubble>
              </Chat>
              <ScrollTrack $w={21}>
                <ScrollArrow $up />
                <ScrollThumb $before={164} $size={248} $after={0} />
                <ScrollArrow $dim />
              </ScrollTrack>
            </ChatArea>
          </TestBox>
          <MessageBox>
            <Caret />
            <PlainInput placeholder="Type your message and press enter" aria-label="Message" />
            <Send type="button" aria-label="Send"><Icon w={20} s={1.3}><path d="M1 2l18 8-18 8 3-8zM4 10h15" /></Icon></Send>
          </MessageBox>
        </TestPanel>
      </Page>

      <Taskbar>
        <Start aria-label="Start"><Svg width="20" height="20" viewBox="0 0 20 20" fill="#fff"><path d="M0 3l8.500-1.200v7.700H0zM9.500 1.700L20 0v9.500H9.500zM0 10.500h8.500v7.700L0 17zM9.500 10.500H20V20L9.500 18.300z" /></Svg></Start>
        <TaskSearch>
          <Icon w={20} s={1.4}><circle cx="12.500" cy="7.500" r="6.500" /><path d="M8 12L.8 19.500" /></Icon>
          <PlainInput placeholder="Type here to search" aria-label="Type here to search" />
          <SearchArt />
        </TaskSearch>
        <TaskApp aria-label="Task view"><Icon w={21} c="#fff"><path d="M1 0v4h12V0M1 6.500h12v7H1zM1 20v-4h12v4M18 0v4M18 11v9" /><path d="M16.500 6h3v3.500h-3z" fill="#fff" stroke="none" /></Icon></TaskApp>
        <TaskApp aria-label="Xbox"><Svg width="30" height="30" viewBox="0 0 30 30"><rect width="30" height="30" rx="2" fill="#107c10" /><circle cx="15" cy="15" r="12" fill="#fff" /><path d="M6 4.500Q13 6.500 18 12.500T24 26M24 4.500Q17 6.500 12 12.500T6 26" stroke="#107c10" strokeWidth="2.400" fill="none" /></Svg></TaskApp>
        <TaskApp $on aria-label="Microsoft Edge"><EdgeLogo /></TaskApp>
        <TaskApp $open aria-label="File Explorer"><Svg width="28" height="26" viewBox="0 0 28 26"><path d="M0 1Q0 0 1 0h10l2 3h14v5H0z" fill="#e0a526" /><path d="M0 5h12l2-2h14v20H0z" fill="#ffd667" /><path d="M5 24V15q0-3 3-3h12q3 0 3 3v9h-5v-5h-8v5z" fill="#3f8fd8" /></Svg></TaskApp>
        <TaskApp aria-label="Dragon"><Svg width="30" height="30" viewBox="0 0 30 30"><path d="M0 0h30v30H0z" fill="#b80a1c" /><path d="M0 11l6 1 4-3 5 2 5-2 6 3-2 1 4 2-6 1-4-1-2 2-5 0-3 2-4-1-4 3zM0 19l9 2M0 23l7 4" fill="#26060a" stroke="#5a0710" /></Svg></TaskApp>
        <TaskApp aria-label="Snipping tool"><Svg width="30" height="30" viewBox="0 0 30 30"><ellipse cx="12" cy="14" rx="11" ry="7" transform="rotate(-35 12 14)" fill="#8a8583" /><ellipse cx="14" cy="8" rx="12" ry="7" transform="rotate(-25 14 8)" fill="#f3f0ef" stroke="#c8322c" /><path d="M17 3l2 17M10 8l12 10" stroke="#9aa3ac" strokeWidth="1.800" /><ellipse cx="23" cy="19" rx="4" ry="2.800" fill="none" stroke="#2d8ad8" strokeWidth="2" /><ellipse cx="18" cy="24" rx="2.800" ry="4" fill="none" stroke="#2d8ad8" strokeWidth="2" /></Svg></TaskApp>
        <Watchlist>
          <Svg width="26" height="26" viewBox="0 0 26 26"><rect x="6" y="5" width="20" height="20" rx="2" fill="#1d5a12" /><rect width="23" height="24" rx="2" fill="#3fa312" /><circle cx="11.500" cy="8.500" r="4.500" fill="#fff" /><path d="M9.500 12h4v3.500h-4z" fill="#fff" /><path d="M3 19h17v2.500H3z" fill="#b6ee2c" /></Svg>
          Watchlist Ideas
        </Watchlist>
        <Tray>
          <Icon w={17} h={10} box="0 0 17 10" s={1.4}><path d="M.5 9.500l8-8 8 8" /></Icon>
          <Icon w={16} h={20} box="0 0 16 20" s={1.3}><rect x="1" y="5" width="9" height="10" rx="2" /><path d="M10 9l4-2.500v7L10 11M2 2.500q4.500-3 9 0M2 17.500q4.500 3 9 0" /></Icon>
          <Icon w={20} h={16} box="0 0 20 16" s={1.3}><path d="M6 4h12v9H4V9M18 7h1.500v3H18M1 0v3M4 0v3M0 3h5v2q0 1.500-2.500 1.500T0 5zM2.500 6.500V10" /><path d="M6 6.500h5v4.500H6z" fill="#fff" stroke="none" /></Icon>
          <Icon w={16} s={1.3}><path d="M1 19Q2 3 19 2M5 19Q6 7 19 6M9 19Q10 11 19 10.500M13 19q1-4 6-4.500" /><circle cx="17" cy="18" r="1.500" fill="#fff" stroke="none" /></Icon>
          <Icon w={19} h={16} box="0 0 19 16" s={1.3}><path d="M1 5.500h2.500L8 1v14l-4.500-4.500H1zM11.500 5l6 6M17.500 5l-6 6" /></Icon>
          <TrayText>ENG</TrayText>
        </Tray>
        <Clock>20:30<br />15-04-2023</Clock>
        <Notify aria-label="Notifications">
          <NotifyIcon>
            <Svg width="20" height="20" viewBox="0 0 20 20"><path d="M0 0h20v16h-9l-4 4v-4H0z" fill="#fff" /><path d="M3.500 4.500h13M3.500 8h13M3.500 11.500h9" stroke="#1f1f1f" strokeWidth="1.500" /></Svg>
            <NotifyCount>20</NotifyCount>
          </NotifyIcon>
        </Notify>
      </Taskbar>
    </Screen>
  );
}
